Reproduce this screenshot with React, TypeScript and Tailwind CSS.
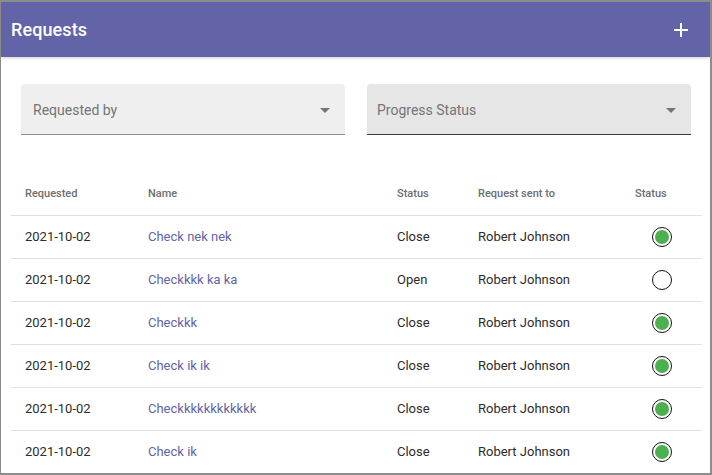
import React from "react";

const rows = [
  { date: "2021-10-02", name: "Check nek nek", status: "Close", to: "Robert Johnson", done: true },
  { date: "2021-10-02", name: "Checkkkk ka ka", status: "Open", to: "Robert Johnson", done: false },
  { date: "2021-10-02", name: "Checkkk", status: "Close", to: "Robert Johnson", done: true },
  { date: "2021-10-02", name: "Check ik ik", status: "Close", to: "Robert Johnson", done: true },
  { date: "2021-10-02", name: "Checkkkkkkkkkkkk", status: "Close", to: "Robert Johnson", done: true },
  { date: "2021-10-02", name: "Check ik", status: "Close", to: "Robert Johnson", done: true },
];

function Caret() {
  return (
    <svg width="10" height="5" viewBox="0 0 10 5" className="shrink-0">
      <path d="M0 0 L10 0 L5 5 Z" fill="#757575" />
    </svg>
  );
}

function StatusDot({ done }: { done: boolean }) {
  return (
    <div className="w-[20px] h-[20px] rounded-full border border-[#111] flex items-center justify-center bg-white">
      {done && <div className="w-[14px] h-[14px] rounded-full bg-[#4caf50]" />}
    </div>
  );
}

export default function App() {
  return (
    <div
      className="w-[712px] h-[475px] bg-white border-l border-r-2 border-b-2 border-t-2 border-[#8c8c8c] overflow-hidden flex flex-col"
      style={{ fontFamily: "Roboto, 'Liberation Sans', sans-serif" }}
    >
      <div className="h-[55px] shrink-0 bg-[#6264a7] flex items-center justify-between pl-[10px] pr-[22px] shadow-[0_1px_3px_rgba(0,0,0,0.2)]">
        <span className="text-white text-[18px] font-medium tracking-[0.1px]">Requests</span>
        <svg width="14" height="14" viewBox="0 0 14 14">
          <path d="M7 0 V14 M0 7 H14" stroke="white" strokeWidth="2" />
        </svg>
      </div>

      <div className="flex gap-[22px] pl-[20px] pr-[19px] pt-[27px]">
        <div className="w-[324px] h-[51px] bg-[#efefef] rounded-t-[4px] border-b border-[#8f8f8f] flex items-center justify-between pl-[12px] pr-[15px] pt-[2px]">
          <span className="text-[14px] text-[#757575]">Requested by</span>
          <Caret />
        </div>
        <div className="w-[324px] h-[51px] bg-[#e6e6e6] rounded-t-[4px] border-b border-[#3a3a3a] flex items-center justify-between pl-[10px] pr-[15px] pt-[2px]">
          <span className="text-[14px] text-[#757575]">Progress Status</span>
          <Caret />
        </div>
      </div>

      <div className="ml-[10px] mr-[8px] mt-[37px] text-[13px] text-[#2d2c2b]">
        <div className="grid grid-cols-[123px_249px_81px_157px_81px] h-[44px] items-center border-b border-[#e0e0e0] text-[11px] font-medium text-[#6e6e6e] pt-[2px]">
          <div className="pl-[14px]">Requested</div>
          <div className="pl-[14px]">Name</div>
          <div className="pl-[14px]">Status</div>
          <div className="pl-[14px]">Request sent to</div>
          <div className="pl-[14px]">Status</div>
        </div>
        {rows.map((r, i) => (
          <div
            key={i}
            className="grid grid-cols-[123px_249px_81px_157px_81px] h-[43px] items-center border-b border-[#e0e0e0]"
          >
            <div className="pl-[14px]">{r.date}</div>
            <div className="pl-[14px] text-[#6264a7]">{r.name}</div>
            <div className="pl-[14px]">{r.status}</div>
            <div className="pl-[14px]">{r.to}</div>
            <div className="flex justify-center">
              <StatusDot done={r.done} />
            </div>
          </div>
        ))}
      </div>
    </div>
  );
}
